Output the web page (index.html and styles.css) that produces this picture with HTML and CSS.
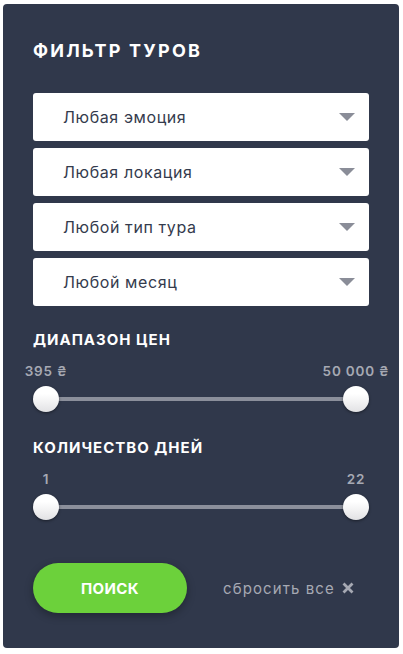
FILE: index.html
```html
<!doctype html>
<html lang="ru">

<head>
    <meta charset="UTF-8" />
    <meta name="viewport" content="width=device-width, initial-scale=1.0" />
    <title>Фильтр туров</title>
    <link rel="stylesheet" href="styles.css">
</head>

<body>
    <form class="filter">
        <h2 class="filter__title">Фильтр туров</h2>

        <div class="selects">
            <div class="select">Любая эмоция<span class="select__arrow"></span></div>
            <div class="select">Любая локация<span class="select__arrow"></span></div>
            <div class="select">Любой тип тура<span class="select__arrow"></span></div>
            <div class="select">Любой месяц<span class="select__arrow"></span></div>
        </div>

        <div class="range range--price">
            <h3 class="range__title">Диапазон цен</h3>
            <div class="range__values">
                <span class="range__value">395 ₴</span>
                <span class="range__value">50 000 ₴</span>
            </div>
            <div class="range__track">
                <span class="range__thumb"></span>
                <span class="range__thumb"></span>
            </div>
        </div>

        <div class="range range--days">
            <h3 class="range__title">Количество дней</h3>
            <div class="range__values">
                <span class="range__value">1</span>
                <span class="range__value">22</span>
            </div>
            <div class="range__track">
                <span class="range__thumb"></span>
                <span class="range__thumb"></span>
            </div>
        </div>

        <div class="actions">
            <button class="button" type="button">Поиск</button>
            <a class="reset" href="#">сбросить все
                <svg class="reset__icon" width="12" height="12" viewBox="0 0 12 12">
                    <path d="M1.5 1.5 L10.5 10.5 M10.5 1.5 L1.5 10.5" stroke="currentColor" stroke-width="2.8"
                        stroke-linecap="butt" />
                </svg>
            </a>
        </div>
    </form>
</body>

</html>
```

FILE: styles.css
```css
:root {
    --panel-bg: #30384b;
    --text-dark: #343b4d;
    --muted: #a6a9b3;
    --arrow: #8a8d98;
    --track: #8b8f9b;
    --green: #6cd13b;
}

* {
    margin: 0;
    padding: 0;
    box-sizing: border-box;
}

body {
    margin: 0;
    padding: 4px 4px 0 3px;
    background: white;
    font-family: 'Inter', 'Noto Sans', sans-serif;
    color: white;
}

.filter {
    width: 396px;
    height: 644px;
    padding: 34px 30px 0;
    background: var(--panel-bg);
    border-radius: 4px;
}

.filter__title {
    font-size: 18px;
    line-height: 26px;
    font-weight: 700;
    letter-spacing: 2.2px;
    text-transform: uppercase;
}

.selects {
    display: flex;
    flex-direction: column;
    gap: 7px;
    margin-top: 29px;
}

.select {
    display: flex;
    align-items: center;
    justify-content: space-between;
    height: 48px;
    padding: 0 14px 0 30px;
    background: white;
    border-radius: 3px;
    color: var(--text-dark);
    font-size: 16px;
    letter-spacing: 0.6px;
}

.select__arrow {
    width: 0;
    height: 0;
    border-left: 8px solid transparent;
    border-right: 8px solid transparent;
    border-top: 8px solid var(--arrow);
}

.range {
    margin-top: 24px;
}

.range--days {
    margin-top: 26px;
}

.range__title {
    font-size: 15px;
    line-height: 20px;
    font-weight: 700;
    letter-spacing: 1px;
    text-transform: uppercase;
}

.range__values {
    display: flex;
    justify-content: space-between;
    margin-top: 12px;
    line-height: 18px;
}

.range__value {
    display: flex;
    justify-content: center;
    width: 26px;
    white-space: nowrap;
    font-size: 13.5px;
    font-weight: 600;
    letter-spacing: 0.8px;
    color: var(--muted);
}

.range__track {
    display: flex;
    justify-content: space-between;
    margin-top: 6px;
    height: 26px;
    background: linear-gradient(var(--track), var(--track)) center / calc(100% - 26px) 4px no-repeat;
}

.range__thumb {
    width: 26px;
    height: 26px;
    border-radius: 50%;
    background: linear-gradient(#ffffff 30%, #e2e2e4);
    box-shadow: 0 1px 3px rgba(0, 0, 0, 0.45);
}

.actions {
    display: flex;
    align-items: center;
    margin-top: 43px;
}

.button {
    width: 154px;
    height: 50px;
    border: 0;
    border-radius: 25px;
    background: var(--green);
    color: white;
    font-family: inherit;
    font-size: 15px;
    font-weight: 700;
    letter-spacing: 0.4px;
    text-transform: uppercase;
    box-shadow: 0 3px 8px rgba(0, 0, 0, 0.3);
    cursor: pointer;
}

.reset {
    display: flex;
    align-items: center;
    gap: 7px;
    margin-left: 36px;
    color: var(--muted);
    font-size: 15px;
    letter-spacing: 1.1px;
    text-decoration: none;
}

.reset__icon {
    display: block;
}
```
